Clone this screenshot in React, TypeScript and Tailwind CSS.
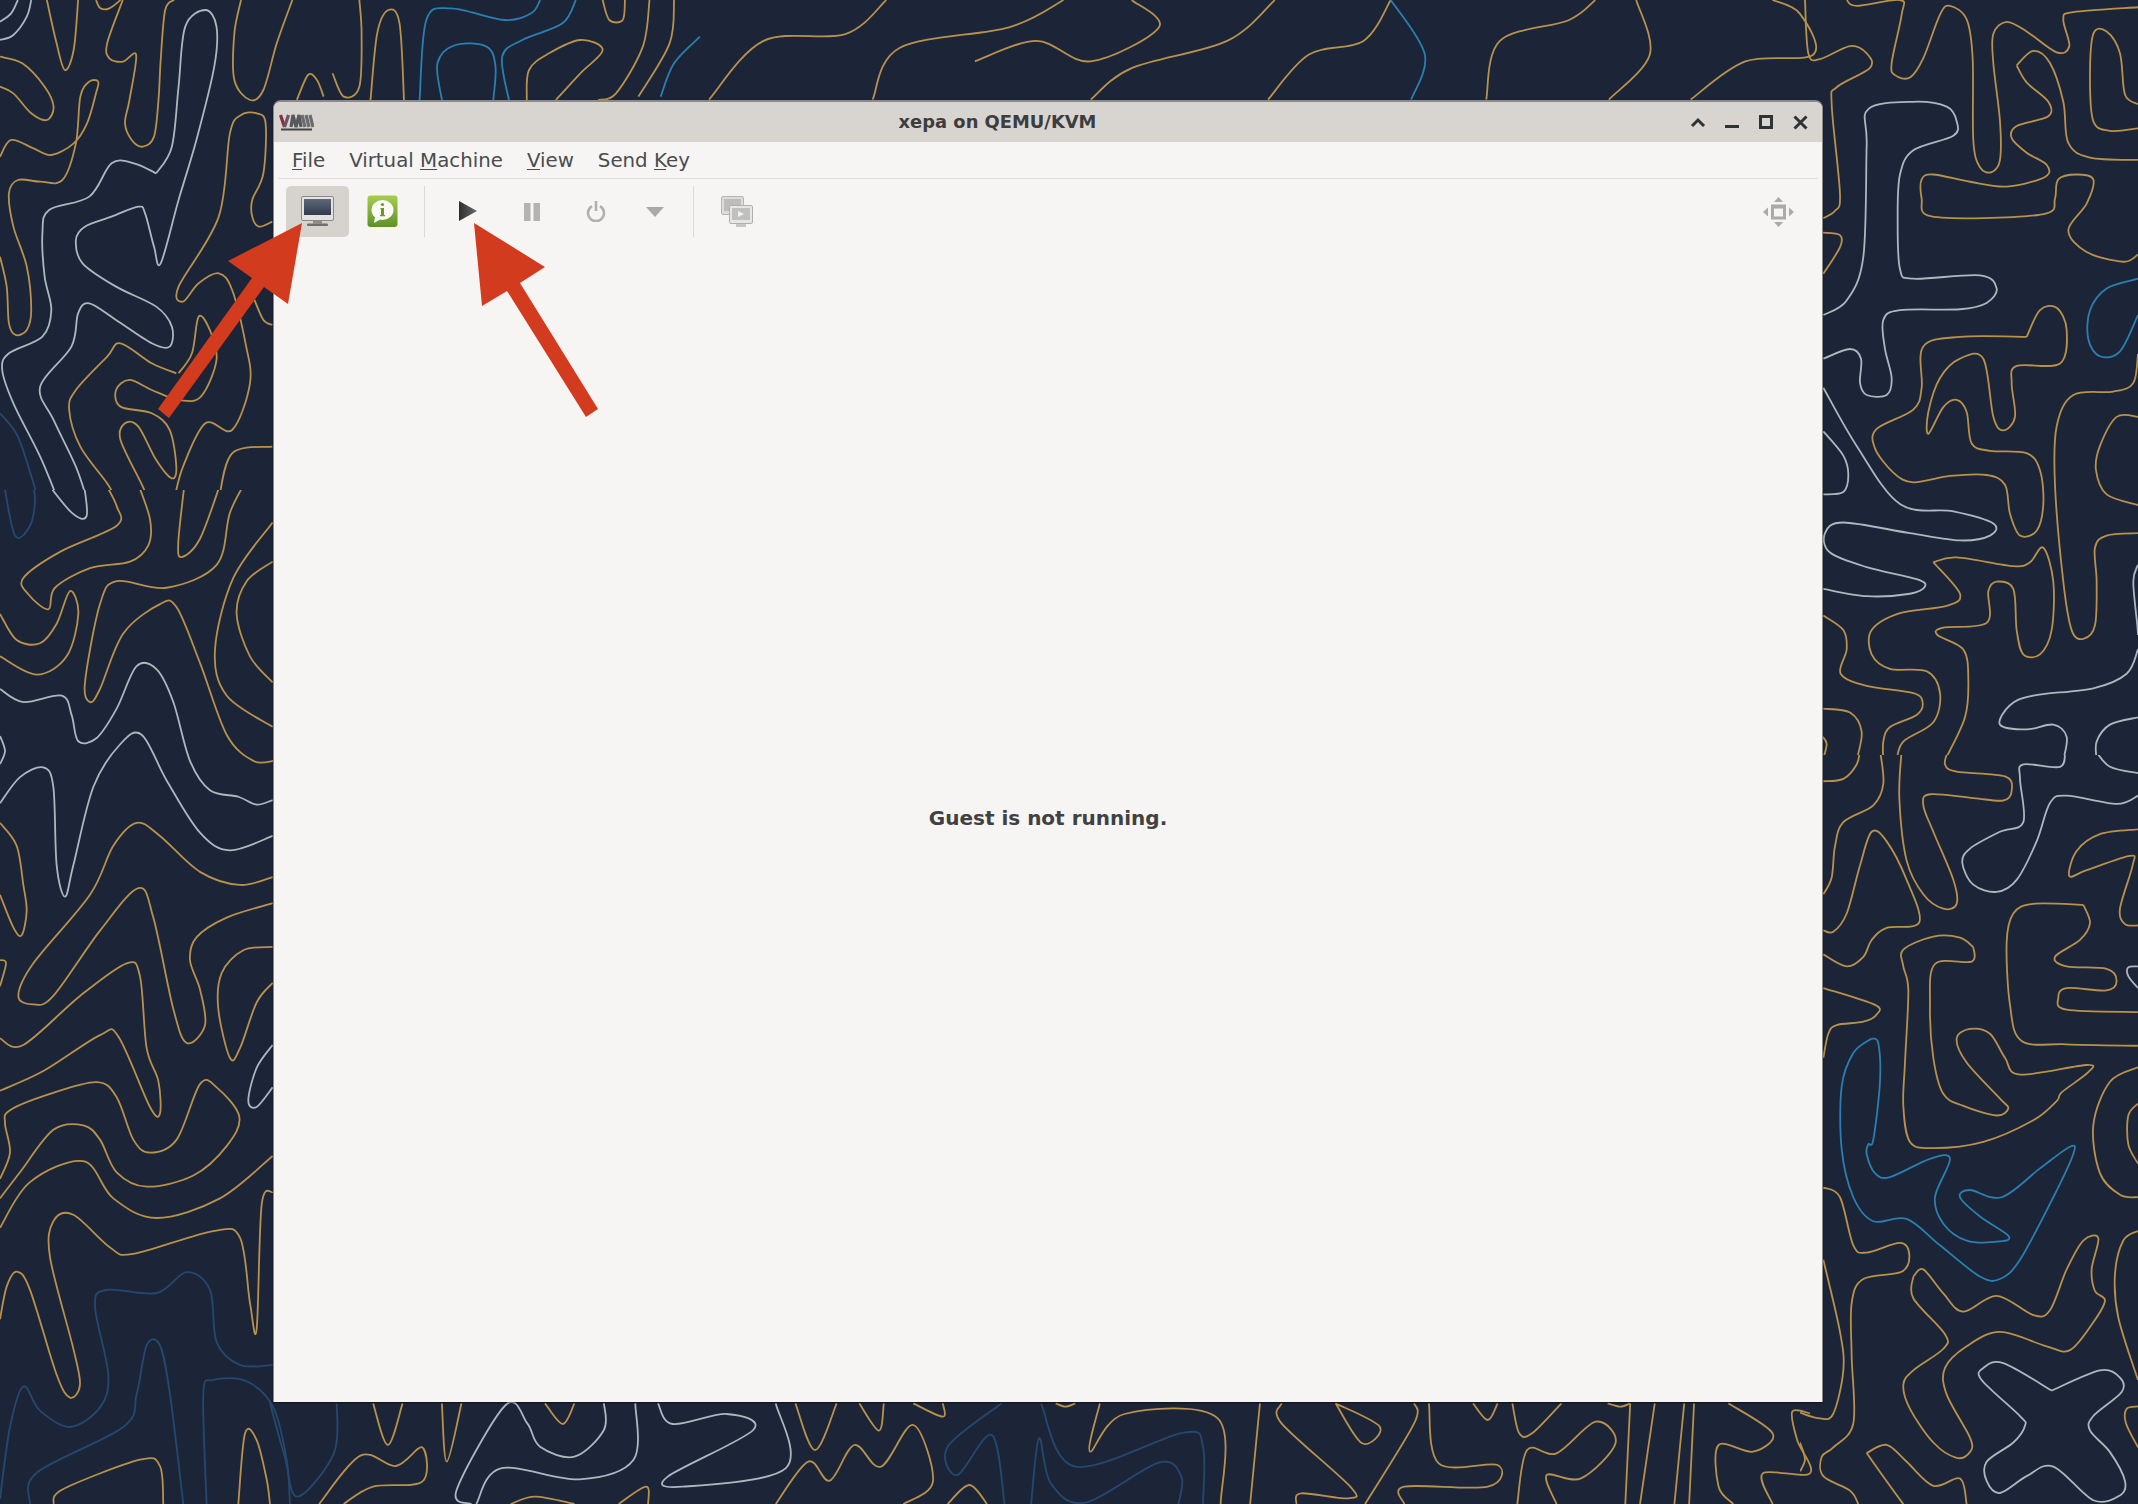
type Trace = [string, string];
type Group = { transform: string; clip: string; lines: Trace[] };

const G = "#b8914c";
const W = "#aeb6be";
const B = "#2b7fb0";
const N = "#26486f";

const groups: Group[] = [
  {
    transform: "scale(0.4464 0.3333)",
    clip: "url(#clip-top)",
    lines: [
      [W, "40,0 25,40 0,65"],
      [W, "70,0 60,50 30,105 0,120"],
      [G, "105,0 125,120 145,210 165,150 175,0"],
      [G, "215,0 225,25 245,25 270,0"],
      [G, "0,170 50,190 100,260 120,320 105,360 70,340 30,280 0,260"],
      [G, "0,470 25,420 75,445 115,465 165,430 195,370 215,280 220,245 200,245 180,290 170,430 140,540 90,545 40,540 20,580 30,680 60,800 70,930 60,990 35,1005 20,970 15,860 0,770"],
      [G, "275,0 240,130 245,175 275,185 305,165 290,300 280,370 295,420 320,440 345,410 355,300 360,180 370,30 390,0"],
      [W, "350,520 385,440 400,260 415,80 460,30 485,80 480,200 440,420 400,600 360,790 345,740 325,640 310,620 250,650 190,680 170,720 185,790 260,860 350,920 385,980 380,1040 340,1030 260,960 200,910 175,940 160,1040 90,1160 120,1260 170,1400 195,1500"],
      [W, "350,520 300,490 250,490 200,590 110,630 95,700 100,830 115,930 95,1010 20,1060 5,1110 30,1210 90,1370 130,1500"],
      [G, "655,0 620,130 590,270 560,300 525,240 525,100 540,0"],
      [G, "665,300 690,225 710,240 725,290"],
      [G, "745,220 770,290 805,260 810,100 805,0"],
      [G, "830,300 845,100 870,30 895,70 905,300"],
      [B, "940,300 955,60 1010,25 1130,60 1190,40 1210,0"],
      [B, "990,300 980,190 1020,135 1090,140 1110,200 1105,300"],
      [B, "1140,300 1125,170 1170,120 1260,70 1290,0"],
      [G, "1180,300 1185,210 1230,160 1300,120 1350,150 1300,220 1245,300"],
      [G, "1350,0 1365,60 1395,60 1400,0"],
      [G, "1455,0 1440,140 1380,280 1340,300"],
      [G, "1510,0 1500,130 1430,290"],
      [B, "1568,110 1510,190 1480,290"],
      [G, "610,665 580,680 565,650 565,600 590,520 595,370 575,340 540,345 515,400 490,650 400,860 410,905 445,850 490,820 520,870 550,1030 560,1150 520,1290 460,1270 410,1400 390,1500"],
      [G, "610,1340 520,1360 490,1500"],
      [G, "570,900 590,960 610,975"],
      [G, "395,1120 340,1090 270,1030 240,1070 170,1170 155,1230 180,1340 240,1450 260,1500"],
      [G, "400,1120 430,1060 445,950 470,990 485,1080 450,1190 400,1200 340,1170 290,1140 260,1170 270,1220 340,1240 380,1290 395,1400 385,1435 350,1380 310,1280 280,1270 270,1320 320,1460 330,1500"],
      [N, "0,1240 40,1310 75,1450 85,1500"],
    ],
  },
  {
    transform: "translate(1800 0) scale(0.3333 0.4847)",
    clip: "url(#clip-right-top)",
    lines: [
      [G, "15,0 25,110 60,122 150,95 200,110 210,140 110,180 95,215 120,400 105,435 70,450"],
      [G, "140,0 170,12 300,0 305,30 275,130 285,155 330,160 370,120 420,30 450,12 500,40 518,120 520,290 540,345 575,355 600,330 600,250 580,130 580,70 620,45 680,65 770,108 808,95 790,40 820,25 1014,15"],
      [G, "1014,215 975,195 960,110 920,65 880,70 870,160 880,250 930,270 1014,265"],
      [G, "650,135 700,105 750,130 790,210 805,295 870,325 1014,330"],
      [G, "650,135 680,170 745,210 745,240 650,260 635,285 680,315 740,340 735,365 620,385 510,375 400,360 365,370 365,410 385,445 550,450 740,440 765,410 775,370 830,360 880,370 860,420 805,475 860,520 970,540 1014,525"],
      [G, "68,480 120,485 120,510 70,565"],
      [W, "70,650 140,620 190,530 200,300 205,225 340,210 440,220 470,250 460,280 340,310 300,360 293,450 300,555 340,575 540,568 590,595 560,625 480,638 300,640 250,660 255,720 275,780 260,815 200,815 180,790 183,740 150,720 70,740"],
      [W, "70,800 170,920 300,1040 460,1055 580,1080 570,1105 480,1115 330,1100 130,1078 75,1100 90,1140 200,1170 350,1195 375,1210 330,1225 200,1230 70,1215"],
      [W, "70,890 130,940 145,980 130,1015 70,1020"],
      [G, "680,695 720,640 770,635 800,680 780,750 650,755 635,790 645,860 610,888 580,860 550,740 480,740 420,780 385,850 385,895 430,840 470,825 500,850 515,915 570,930 680,935 720,970 730,1040 710,1095 660,1105 630,1060 615,1000 560,980 450,982 340,995 280,975 225,925 230,885 340,845 365,800 370,715 480,695 680,695"],
      [B, "1014,575 920,595 870,640 865,700 900,735 960,725 1014,650"],
      [G, "1014,730 1000,790 940,808 820,815 770,880 765,1000 790,1200 815,1300 850,1318 885,1290 890,1200 885,1130 920,1105 1014,1100"],
      [G, "1014,860 950,860 900,920 888,970 920,1020 1014,1042"],
      [G, "400,1160 470,1150 640,1168 690,1160 730,1130 760,1200 755,1300 720,1350 670,1350 650,1300 640,1215 590,1200 565,1220 560,1285 430,1295 412,1310 490,1340 505,1400 495,1480 435,1568"],
      [G, "400,1160 480,1225 440,1250 300,1265 215,1300 215,1350 270,1380 380,1385 420,1430 400,1490 310,1530 290,1568"],
      [G, "70,1270 130,1300 140,1340 122,1390 200,1415 340,1430 368,1450 350,1475 270,1500 250,1530 250,1568"],
      [G, "70,1462 150,1470 185,1510 170,1568"],
      [W, "1014,1340 980,1390 880,1420 700,1435 630,1455 600,1495 680,1505 760,1495 800,1520 790,1568"],
      [W, "1014,1165 1000,1200 1012,1290 1014,1310"],
      [W, "1014,1480 930,1495 890,1530 890,1568"],
      [G, "68,1520 80,1535 70,1565"],
    ],
  },
  {
    transform: "translate(1800 750) scale(0.3333 0.4809)",
    clip: "url(#clip-right-bottom)",
    lines: [
      [G, "70,65 130,60 170,30 180,0"],
      [G, "240,0 250,70 220,115 130,150 105,200 95,265 70,300"],
      [G, "70,375 100,378 140,340 180,240 215,170 260,190 320,270 358,358 260,370 215,395 190,430 140,450 70,425"],
      [G, "305,0 298,100 320,230 370,300 430,330 470,320 460,270 400,170 370,115 390,92 520,100 610,105 635,85 615,55 470,45 435,30 445,0"],
      [W, "795,0 780,35 670,30 660,60 670,150 600,170 510,205 487,235 520,280 590,295 650,270 710,190 750,110 800,95 950,112 1014,95"],
      [W, "885,0 930,35 1014,48"],
      [G, "1014,165 900,175 830,210 808,262 860,250 990,220 998,240 960,330 975,362 1014,365"],
      [G, "850,322 700,320 640,340 620,400 630,530 665,605 800,612 1014,615"],
      [G, "850,322 870,360 840,395 765,430 800,450 920,455 950,480 920,500 800,495 775,515 800,540 1014,545"],
      [W, "1014,495 985,470 985,452 1014,450"],
      [G, "520,410 480,390 400,388 310,415 310,450 325,500 315,650 310,740 330,815 400,828 550,815 700,770 770,730 785,712 865,670 860,655 660,675 615,640 570,590 510,580 470,600 500,650 600,725 625,745 590,760 490,740 430,715 400,640 390,530 405,445 515,440 520,410"],
      [G, "70,495 225,530 230,550 190,565 110,572 85,590 70,640"],
      [B, "215,600 160,630 125,700 125,830 160,930 220,980 320,975 420,1030 540,1095 600,1100 660,1060 760,930 820,840 810,825 720,870 605,930 510,915 480,930 540,970 625,1010 600,1022 500,1020 430,985 405,930 450,850 390,850 270,888 225,880 200,840 205,820 220,810 240,690 235,610 215,600"],
      [G, "70,910 120,930 160,1030 200,1045 300,1025 328,1050 305,1085 190,1100 155,1150 155,1260 160,1400 100,1450 65,1470 70,1510 150,1540 175,1568"],
      [G, "70,1060 120,1210 130,1290 100,1380 60,1390 0,1378"],
      [G, "340,1095 370,1080 430,1130 490,1168 590,1135 700,1175 750,1165 800,1080 850,1020 895,1015 875,1080 885,1125 915,1145 880,1190 810,1248 740,1240 600,1210 500,1240 435,1285 440,1340 510,1430 510,1460 470,1472 400,1440 330,1370 310,1320 340,1290 430,1245 435,1215 340,1140 340,1095"],
      [G, "1014,1000 970,1020 945,1090 955,1180 1014,1310"],
      [W, "755,1332 610,1275 550,1285 545,1310 660,1385 675,1405 640,1440 560,1480 560,1520 600,1545 680,1510 760,1490 880,1560 960,1550 975,1520 930,1460 870,1415 880,1385 965,1335 960,1305 900,1290 755,1332"],
      [G, "200,1462 260,1445 320,1480 400,1530 480,1515 500,1568"],
      [G, "200,1462 280,1540 310,1568"],
      [G, "1014,660 930,690 880,780 900,880 960,925 1014,930"],
      [G, "1014,735 985,760 985,820 1014,860"],
      [G, "1014,1365 980,1370 978,1400 1014,1450"],
      [G, "0,1440 15,1475 0,1500"],
    ],
  },
  {
    transform: "translate(0 480) scale(0.3333 0.6531)",
    clip: "url(#clip-left-bottom)",
    lines: [
      [N, "10,0 45,85 90,70 105,30 95,0"],
      [W, "135,0 215,50 260,55 250,0"],
      [G, "310,0 350,40 350,70 180,110 70,150 85,175 145,198 165,165 270,135 390,125 445,100 450,60 410,0"],
      [G, "555,0 535,95 545,118 600,90 665,0"],
      [G, "740,0 690,50 650,130 500,165 350,155 300,190 255,310 270,340 300,320 370,235 480,190 530,195 600,280 680,390 760,430 820,430"],
      [G, "818,65 700,150 645,260 680,330 818,378"],
      [G, "818,125 740,155 710,205 750,270 818,310"],
      [G, "0,205 50,245 120,250 170,220 210,170 235,205 200,270 110,298 0,270"],
      [W, "0,320 70,340 185,330 215,360 235,400 290,395 350,350 410,285 470,290 520,340 570,430 630,475 715,485 770,497 818,490"],
      [W, "0,392 15,415 0,435"],
      [W, "0,495 60,455 130,440 160,470 170,590 195,638 220,590 280,470 360,405 425,390 500,460 600,540 690,567 818,545"],
      [G, "0,525 50,560 70,620 80,660 65,697 40,685 0,635"],
      [G, "818,608 720,620 600,600 480,545 410,525 340,560 270,635 100,740 55,790 100,803 160,790 300,690 415,625 460,670 520,810 560,862 615,835 600,780 570,735 590,700 680,670 818,648"],
      [G, "0,855 70,865 240,790 380,740 420,760 440,870 475,920 480,970 450,960 355,852 300,850 130,905 0,935"],
      [G, "818,715 730,720 665,755 655,810 690,885 720,870 770,800 818,770"],
      [W, "818,865 770,900 745,950 770,960 818,930"],
      [G, "0,735 18,740 0,775"],
      [G, "0,1070 30,1030 15,985 30,965 150,940 290,922 350,945 400,1010 450,1030 530,1010 600,925 650,930 718,975 680,1020 580,1065 440,1082 350,1060 300,1010 250,988 160,995 60,1060 0,1100"],
      [G, "0,1145 90,1075 250,1043 340,1100 470,1130 660,1100 818,1035"],
      [G, "818,1090 785,1110 770,1300 750,1260 720,1160 640,1150 400,1185 330,1175 220,1125 160,1135 150,1190 220,1330 240,1385 210,1405 170,1370 90,1240 50,1212 20,1235 0,1285"],
      [N, "818,1355 720,1355 650,1320 630,1240 560,1213 470,1245 320,1240 285,1265 325,1370 300,1420 210,1450 120,1425 70,1388 30,1450 0,1560"],
      [N, "90,1568 110,1520 370,1450 410,1400 440,1325 480,1325 510,1400 550,1568"],
      [N, "620,1568 610,1400 640,1378 740,1380 820,1420 860,1500 870,1568"],
      [G, "160,1568 190,1545 420,1500 480,1510 490,1568"],
      [G, "715,1568 735,1460 770,1470 800,1530 810,1568"],
    ],
  },
  {
    transform: "translate(270 1390) scale(0.9821 0.3333)",
    clip: "url(#clip-all)",
    lines: [
      [N, "0,40 15,200 28,320 65,190 68,40"],
      [G, "105,40 120,165 135,40"],
      [G, "50,342 92,197 128,228 155,172 155,275 105,290 75,342"],
      [G, "175,40 180,215 195,40"],
      [W, "205,342 190,300 240,45 262,100 275,170 310,200 340,120 340,40"],
      [W, "210,342 235,235 315,268 370,210 372,40"],
      [G, "280,40 298,102 310,40"],
      [W, "395,40 410,102 465,72 492,120 405,260 420,290 525,235 515,40"],
      [G, "535,40 555,180 577,40"],
      [G, "600,40 620,122 625,40"],
      [G, "655,40 685,80 685,40"],
      [G, "515,342 548,215 570,272 595,165 622,230 655,105 675,275 645,342"],
      [N, "745,40 690,170 700,255 735,135 748,342"],
      [N, "785,40 820,230 930,128 950,170 950,342"],
      [N, "775,342 783,145 795,280 830,338 905,218 928,260 925,342"],
      [G, "800,40 810,50 820,40"],
      [G, "845,40 835,185 870,72 965,85 968,342"],
      [G, "690,342 712,285 730,342"],
      [G, "245,342 270,320 310,342"],
      [G, "355,342 383,290 385,342"],
      [G, "1008,40 998,342"],
      [G, "1030,40 1030,100 1100,290 1098,325 1050,310 1045,342"],
      [G, "1085,40 1130,110 1112,160 1085,40"],
      [G, "1115,342 1165,100 1165,40"],
      [G, "1180,40 1190,220 1250,225 1240,290 1155,290 1155,342"],
      [G, "1225,40 1240,90 1250,40"],
      [G, "1265,40 1272,130 1285,130 1315,40"],
      [G, "1270,342 1280,180 1310,190 1350,95 1370,160 1335,265 1300,255 1310,342"],
      [G, "1385,40 1380,342"],
      [G, "1410,40 1395,342"],
      [G, "1440,40 1430,342"],
      [G, "1450,40 1445,342"],
      [G, "1362,40 1375,50 1385,40"],
      [G, "1485,40 1530,130 1510,185 1475,165 1475,290 1490,342"],
      [G, "1568,70 1550,65 1555,150 1568,250 1520,250 1530,342"],
    ],
  },
  {
    transform: "scale(1.3635)",
    clip: "url(#clip-all)",
    lines: [
      [G, "520,73 560,30 620,25 650,0"],
      [G, "640,73 660,35 740,20 780,0"],
      [G, "715,45 760,30 800,45 850,20 830,0"],
      [G, "800,73 830,50 900,30 935,0"],
      [G, "930,73 960,40 1000,30 1020,0"],
      [B, "1020,0 1045,40 1035,73"],
      [G, "1090,73 1100,30 1150,15 1170,0"],
      [G, "1180,73 1210,40 1200,0"],
      [G, "1240,73 1280,45 1330,40 1320,10 1300,0"],
    ],
  },
];

// catmull-rom through the traced points
function smooth(raw: string) {
  const p = raw.split(" ").map((s) => s.split(",").map(Number));
  let d = `M${p[0][0]} ${p[0][1]}`;
  for (let i = 0; i < p.length - 1; i++) {
    const a = p[Math.max(i - 1, 0)];
    const b = p[i];
    const c = p[i + 1];
    const e = p[Math.min(i + 2, p.length - 1)];
    const c1x = b[0] + (c[0] - a[0]) / 6;
    const c1y = b[1] + (c[1] - a[1]) / 6;
    const c2x = c[0] - (e[0] - b[0]) / 6;
    const c2y = c[1] - (e[1] - b[1]) / 6;
    d += `C${c1x} ${c1y} ${c2x} ${c2y} ${c[0]} ${c[1]}`;
  }
  return d;
}

const Wallpaper = () => (
  <svg className="absolute inset-0" width="2138" height="1504" fill="none">
    <defs>
      <clipPath id="clip-top">
        <rect x="0" y="0" width="1000" height="490" />
      </clipPath>
      <clipPath id="clip-left-bottom">
        <rect x="0" y="490" width="300" height="1014" />
      </clipPath>
      <clipPath id="clip-right-top">
        <rect x="1800" y="0" width="338" height="755" />
      </clipPath>
      <clipPath id="clip-right-bottom">
        <rect x="1800" y="755" width="338" height="749" />
      </clipPath>
      <clipPath id="clip-all">
        <rect x="0" y="0" width="2138" height="1504" />
      </clipPath>
    </defs>
    {groups.map((g, i) => (
      <g key={i} clipPath={g.clip}>
        <g transform={g.transform}>
          {g.lines.map(([color, pts], j) => (
            <path
              key={j}
              d={smooth(pts)}
              stroke={color}
              strokeWidth={1.8}
              vectorEffect="non-scaling-stroke"
            />
          ))}
        </g>
      </g>
    ))}
  </svg>
);

const VmLogo = () => (
  <svg width="36" height="18" viewBox="0 0 36 18" fill="none" strokeWidth="3.2">
    <path d="M3 16.500h31" stroke="#444444" strokeWidth="2" />
    <path d="M2.500 2l4 12" stroke="#8d2b45" />
    <path d="M10.500 2l-4 12" stroke="#6b5560" />
    <path d="M13 14l2-12 3 12 3-12 2 12" stroke="#55585c" />
    <path d="M24 2l3 12M28 2l3 12M32 2l3 12" stroke="#6a6c6f" />
  </svg>
);

const MonitorIcon = () => (
  <svg width="33" height="31" viewBox="0 0 33 31">
    <defs>
      <linearGradient id="screen" x1="0" y1="0" x2="0" y2="1">
        <stop offset="0" stopColor="#5d6879" />
        <stop offset="1" stopColor="#343c4c" />
      </linearGradient>
    </defs>
    <rect x="0.5" y="0.5" width="32" height="24" rx="1.5" fill="#e2e2e0" stroke="#8a8a88" />
    <rect x="3" y="3" width="27" height="16" fill="url(#screen)" />
    <rect x="12" y="25" width="9" height="2.5" fill="#8c8c8a" />
    <rect x="6" y="27.5" width="21" height="2.5" rx="1" fill="#6f6f6d" />
  </svg>
);

const InfoIcon = () => (
  <svg width="31" height="33" viewBox="0 0 31 33">
    <defs>
      <linearGradient id="info" x1="0" y1="0" x2="0" y2="1">
        <stop offset="0" stopColor="#a6cf4d" />
        <stop offset="1" stopColor="#5f9128" />
      </linearGradient>
    </defs>
    <rect x="0.5" y="0.5" width="30" height="31.5" rx="3" fill="url(#info)" />
    <ellipse cx="15.5" cy="15" rx="11" ry="10" fill="#fafaf7" />
    <path d="M8 22l-1 6 7-4z" fill="#fafaf7" />
    <circle cx="15.5" cy="9.5" r="1.6" fill="#6b9a2a" />
    <path d="M13.500 13h3.500v7h1v1.200h-5V20h1v-5.800h-.5z" fill="#6b9a2a" />
  </svg>
);

const PlayIcon = () => (
  <svg width="18" height="20" viewBox="0 0 18 20">
    <defs>
      <linearGradient id="play" x1="0" y1="0" x2="1" y2="0">
        <stop offset="0" stopColor="#2e2e2e" />
        <stop offset="1" stopColor="#6a6a6a" />
      </linearGradient>
    </defs>
    <path d="M0 0l18 10L0 20z" fill="url(#play)" />
  </svg>
);

const PauseIcon = () => (
  <svg width="16" height="18" viewBox="0 0 16 18" fill="#b3b3b1">
    <rect width="6.5" height="18" />
    <rect x="9.5" width="6.5" height="18" />
  </svg>
);

const PowerIcon = () => (
  <svg width="20" height="21" viewBox="0 0 20 21" fill="none" stroke="#b0b0ae" strokeWidth="2.6">
    <path d="M6 5.200a8 8 0 1 0 8 0" />
    <path d="M10 0v10" />
  </svg>
);

const CaretIcon = () => (
  <svg width="18" height="10" viewBox="0 0 18 10" fill="#a9a9a7">
    <path d="M0 0h18L9 10z" />
  </svg>
);

const ScreensIcon = () => (
  <svg width="32" height="32" viewBox="0 0 32 32">
    <rect x="0.5" y="0.5" width="22" height="18" rx="1.5" fill="#dcdcda" stroke="#b5b5b3" />
    <rect x="3" y="3" width="17" height="12" fill="#bcbcba" />
    <rect x="8.5" y="9.5" width="23" height="18" rx="1.5" fill="#e6e6e4" stroke="#b0b0ae" />
    <rect x="11" y="12" width="18" height="12" fill="#c0c0be" />
    <path d="M17 15l6 3-6 3z" fill="#f2f2f0" />
    <rect x="15" y="28" width="10" height="3" fill="#c6c6c4" />
  </svg>
);

const MoveIcon = () => (
  <svg width="31" height="30" viewBox="0 0 31 30" fill="#aaaaa8">
    <path d="M15.500 0l4.500 5h-9zM15.500 30l-4.500-5h9zM0 15l5-4.500v9zM31 15l-5-4.500v9z" />
    <path fillRule="evenodd" d="M8 7.500h15v15H8zm3 4v8h9v-8z" />
  </svg>
);

const Tool = ({ w, active, children }: { w: string; active?: boolean; children: React.ReactNode }) => (
  <div className={`${w} h-[51px] flex items-center justify-center rounded-[5px] ${active ? "bg-[#d6d2ce]" : ""}`}>
    {children}
  </div>
);

const Separator = () => <div className="w-px h-[51px] bg-[#dcdad7]" />;

const App = () => {
  return (
    <div className="relative w-[2138px] h-[1504px] overflow-hidden bg-[#1c2538] pt-[100px] pl-[273px] font-['DejaVu_Sans',sans-serif]">
      <Wallpaper />

      <div className="relative w-[1550px] h-[1302px] flex flex-col bg-[#f6f5f4] rounded-t-[8px] border-t-2 border-x border-[#8c8a88] border-b-0 shadow-[0_1px_2px_rgba(0,0,0,0.5)]">
        <div className="h-[40px] shrink-0 flex items-center bg-[#d8d4d0] rounded-t-[6px] pl-[4px] pr-[5px]">
          <VmLogo />
          <div className="flex-1 text-center pt-[1px] text-[17.900px] font-bold text-[#3d3d3d]">xepa on QEMU/KVM</div>
          <div className="flex items-center text-[#2e3436]">
            <div className="w-[34px] h-[34px] flex items-center justify-center">
              <svg width="16" height="10" viewBox="0 0 16 10" fill="none" stroke="currentColor" strokeWidth="3">
                <path d="M2 9l6-6 6 6" />
              </svg>
            </div>
            <div className="w-[34px] h-[34px] flex items-center justify-center">
              <div className="w-[14px] h-[3px] bg-[#2e3436] mt-[8px]" />
            </div>
            <div className="w-[34px] h-[34px] flex items-center justify-center">
              <div className="w-[14px] h-[14px] border-[3px] border-[#2e3436]" />
            </div>
            <div className="w-[34px] h-[34px] flex items-center justify-center">
              <svg width="15" height="15" viewBox="0 0 15 15" fill="none" stroke="currentColor" strokeWidth="3">
                <path d="M1.5 1.5l12 12M13.5 1.5l-12 12" />
              </svg>
            </div>
          </div>
        </div>

        <div className="h-[37px] shrink-0 mx-[4px] flex items-center gap-[24px] pl-[14px] pt-[2px] border-b border-[#e2e0dd] text-[19.800px] text-[#4a4c4e]">
          <span><u className="underline-offset-2">F</u>ile</span>
          <span>Virtual <u className="underline-offset-2">M</u>achine</span>
          <span><u className="underline-offset-2">V</u>iew</span>
          <span>Send <u className="underline-offset-2">K</u>ey</span>
        </div>

        <div className="flex items-center h-[51px] mt-[7px] pl-[12px] pr-[12px]">
          <Tool w="w-[63px]" active>
            <MonitorIcon />
          </Tool>
          <Tool w="w-[66px]">
            <InfoIcon />
          </Tool>
          <div className="ml-[9px] mr-[11px]">
            <Separator />
          </div>
          <Tool w="w-[64px]">
            <div className="mb-[2px]">
              <PlayIcon />
            </div>
          </Tool>
          <Tool w="w-[64px]">
            <PauseIcon />
          </Tool>
          <Tool w="w-[64px]">
            <PowerIcon />
          </Tool>
          <Tool w="w-[54px]">
            <CaretIcon />
          </Tool>
          <div className="ml-[11px] mr-[11px]">
            <Separator />
          </div>
          <Tool w="w-[64px]">
            <ScreensIcon />
          </Tool>
          <div className="ml-auto">
            <Tool w="w-[64px]">
              <MoveIcon />
            </Tool>
          </div>
        </div>

        <div className="flex-1 flex items-center justify-center pt-[1px] pb-[5px] text-[20px] font-bold text-[#3f4143]">
          Guest is not running.
        </div>
      </div>

      <svg className="absolute inset-0 pointer-events-none" width="2138" height="1504" fill="#d33b1e">
        <path d="M302 223L228 261 252 278 158 409 169 418 264 287 288 304z" />
        <path d="M474 223L545 267 520 283 598 409 586 417 507 291 482 306z" />
      </svg>
    </div>
  );
};

export default App;
